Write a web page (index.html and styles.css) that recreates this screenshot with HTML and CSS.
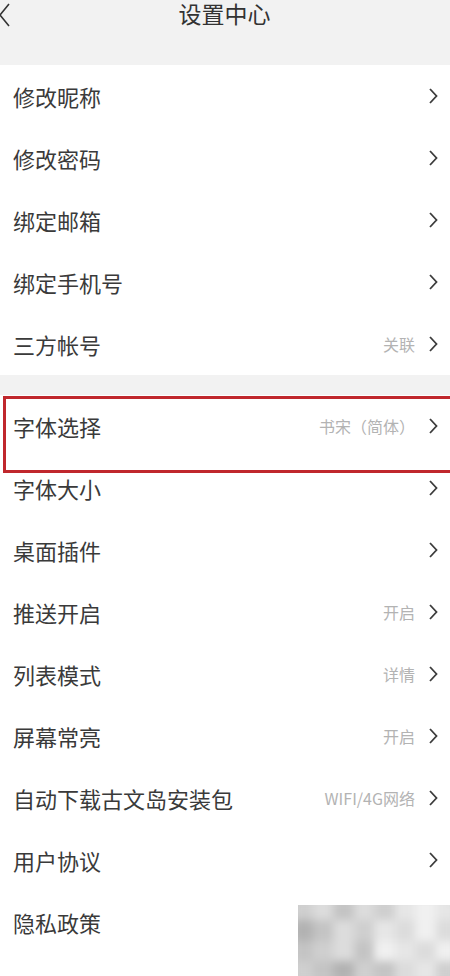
FILE: index.html
```html
<!DOCTYPE html>
<html>
  <head>
    <title>设置中心</title>
    <link rel="stylesheet" href="styles.css">
  </head>
  <body>
    <div class="header">
      <svg class="back" width="12" height="26" viewBox="0 0 12 26"><path d="M10 2 L1 13 L10 24" fill="none" stroke="#333" stroke-width="1.6"/></svg>
      <span class="title">设置中心</span>
    </div>

    <ul class="group">
      <li><span class="label">修改昵称</span><svg class="arrow" viewBox="0 0 10 16"><path d="M2 1 L8.5 8 L2 15"/></svg></li>
      <li><span class="label">修改密码</span><svg class="arrow" viewBox="0 0 10 16"><path d="M2 1 L8.5 8 L2 15"/></svg></li>
      <li><span class="label">绑定邮箱</span><svg class="arrow" viewBox="0 0 10 16"><path d="M2 1 L8.5 8 L2 15"/></svg></li>
      <li><span class="label">绑定手机号</span><svg class="arrow" viewBox="0 0 10 16"><path d="M2 1 L8.5 8 L2 15"/></svg></li>
      <li><span class="label">三方帐号</span><span class="value">关联</span><svg class="arrow" viewBox="0 0 10 16"><path d="M2 1 L8.5 8 L2 15"/></svg></li>
    </ul>

    <ul class="group second">
      <li><span class="label">字体选择</span><span class="value">书宋（简体）</span><svg class="arrow" viewBox="0 0 10 16"><path d="M2 1 L8.5 8 L2 15"/></svg></li>
      <li><span class="label">字体大小</span><svg class="arrow" viewBox="0 0 10 16"><path d="M2 1 L8.5 8 L2 15"/></svg></li>
      <li><span class="label">桌面插件</span><svg class="arrow" viewBox="0 0 10 16"><path d="M2 1 L8.5 8 L2 15"/></svg></li>
      <li><span class="label">推送开启</span><span class="value">开启</span><svg class="arrow" viewBox="0 0 10 16"><path d="M2 1 L8.5 8 L2 15"/></svg></li>
      <li><span class="label">列表模式</span><span class="value">详情</span><svg class="arrow" viewBox="0 0 10 16"><path d="M2 1 L8.5 8 L2 15"/></svg></li>
      <li><span class="label">屏幕常亮</span><span class="value">开启</span><svg class="arrow" viewBox="0 0 10 16"><path d="M2 1 L8.5 8 L2 15"/></svg></li>
      <li><span class="label">自动下载古文岛安装包</span><span class="value">WIFI/4G网络</span><svg class="arrow" viewBox="0 0 10 16"><path d="M2 1 L8.5 8 L2 15"/></svg></li>
      <li><span class="label">用户协议</span><svg class="arrow" viewBox="0 0 10 16"><path d="M2 1 L8.5 8 L2 15"/></svg></li>
      <li><span class="label">隐私政策</span></li>
      <div class="highlight"></div>
    </ul>

    <div class="mosaic">
      <div class="cells">
        <i class="m3"></i><i class="m4"></i><i class="m2"></i><i class="m4"></i><i class="m3"></i><i class="m5"></i><i class="m6"></i><i class="m5"></i>
        <i class="m1"></i><i class="m2"></i><i class="m4"></i><i class="m3"></i><i class="m5"></i><i class="m4"></i><i class="m6"></i><i class="m4"></i>
        <i class="m2"></i><i class="m3"></i><i class="m4"></i><i class="m2"></i><i class="m6"></i><i class="m5"></i><i class="m4"></i><i class="m6"></i>
        <i class="m3"></i><i class="m2"></i><i class="m1"></i><i class="m3"></i><i class="m2"></i><i class="m4"></i><i class="m5"></i><i class="m3"></i>
      </div>
    </div>
  </body>
</html>
```

FILE: styles.css
```css
body {
  margin: 0;
  background: #fff;
  font-family: "Noto Sans CJK SC", sans-serif;
  color: #333;
  overflow: hidden;
  position: relative;
  height: 976px;
}

.header {
  background: #f2f2f2;
  height: 65px;
  display: flex;
  justify-content: center;
  align-items: flex-start;
}

.back {
  position: absolute;
  left: -1px;
  top: 2px;
}

.title {
  font-size: 23px;
  line-height: 27px;
  color: #333;
  margin-left: -1px;
}

.group {
  list-style: none;
  margin: 0;
  padding: 0;
  background: #fff;
}

.second {
  position: relative;
  overflow: hidden;
  border-top: 20px solid #f2f2f2;
}

.group > li {
  height: 62px;
  display: flex;
  align-items: center;
  padding: 0 12px 0 13px;
}

.label {
  font-size: 22px;
  flex: 1;
  color: #3a3a3a;
}

.value {
  font-size: 16px;
  color: #b3b3b3;
  margin-right: 13px;
}

.arrow {
  width: 10px;
  height: 16px;
  fill: none;
  stroke: #3c3c3c;
  stroke-width: 1.8;
}

.highlight {
  position: absolute;
  top: 1px;
  left: 3px;
  width: 470px;
  height: 71px;
  border: 3px solid #c0272d;
}

.mosaic {
  position: absolute;
  left: 298px;
  top: 905px;
  width: 152px;
  height: 71px;
  overflow: hidden;
  background: #d4d4d4;
}

.cells {
  margin: -6px;
  height: 83px;
  display: grid;
  grid-template-columns: repeat(8, 1fr);
  filter: blur(4px);
}

.m1 { background: #b2b2b2; }
.m2 { background: #c4c4c4; }
.m3 { background: #cfcfcf; }
.m4 { background: #dcdcdc; }
.m5 { background: #e6e6e6; }
.m6 { background: #f0f0f0; }
```
